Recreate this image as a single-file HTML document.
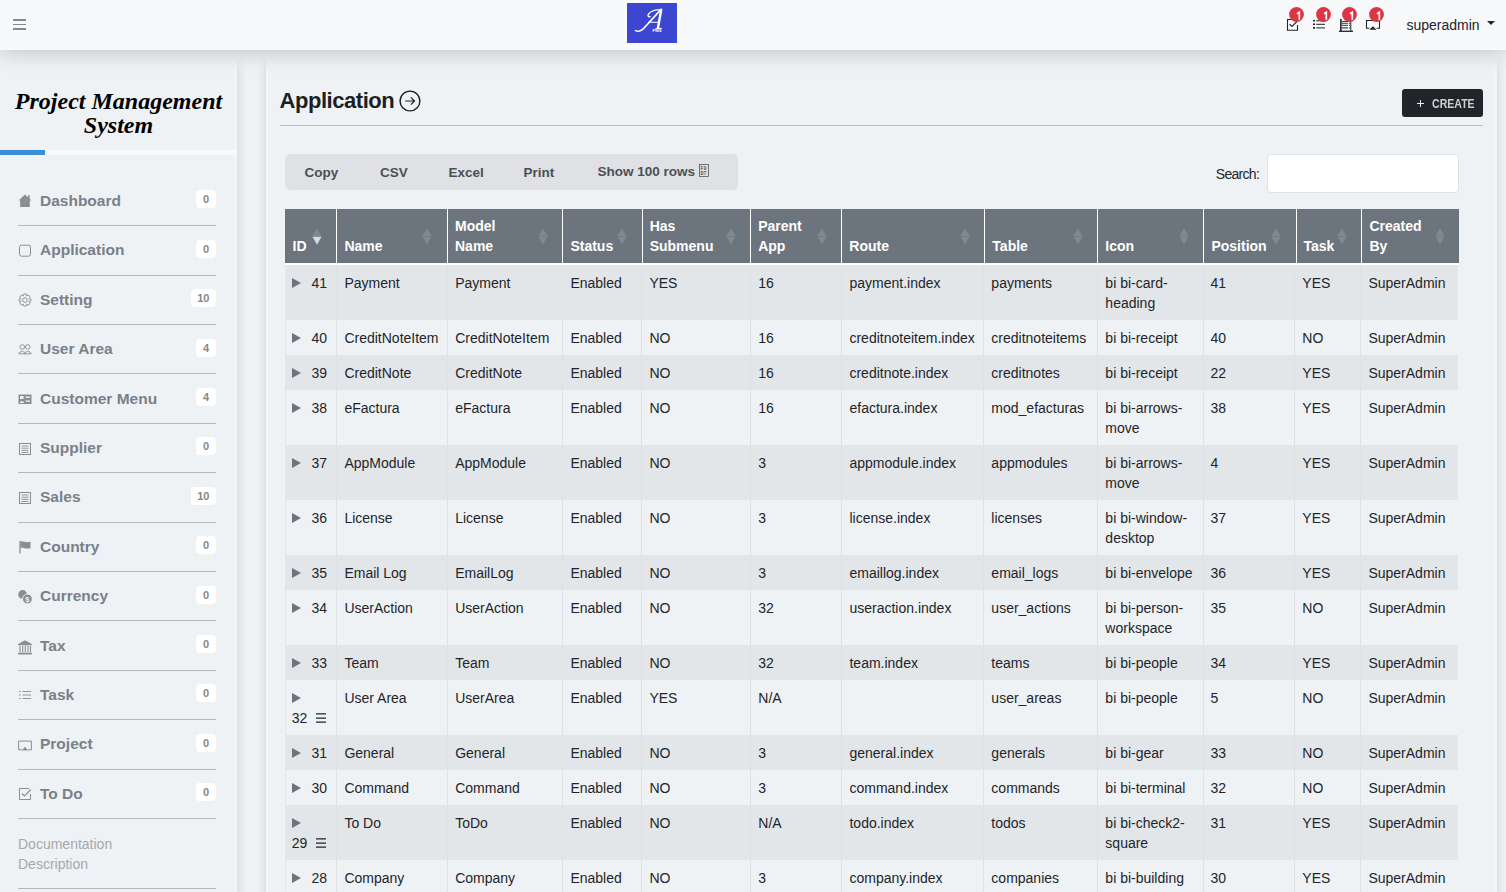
<!DOCTYPE html>
<html><head><meta charset="utf-8"><title>Application</title>
<style>
*{box-sizing:border-box;}
html,body{margin:0;padding:0;}
body{width:1506px;height:892px;overflow:hidden;background:#eff2f5;font-family:"Liberation Sans",sans-serif;color:#212529;position:relative;}
svg{display:block;overflow:visible;}
.nav{position:absolute;left:0;top:0;width:1506px;height:50px;background:#f8f9fa;box-shadow:0 2px 22px rgba(0,0,0,.20);z-index:5;}
.burger{position:absolute;left:12.7px;top:19px;width:13.3px;height:11px;}
.burger i{position:absolute;left:0;width:100%;height:1.5px;background:#86898c;}
.logo{position:absolute;left:627px;top:3px;width:50px;height:40px;background:#3d46d1;}
.nicon{position:absolute;}
.nbadge{position:absolute;top:7px;width:15px;height:15px;}
.user{position:absolute;left:1406.5px;top:14.5px;font-size:14px;line-height:20px;color:#212529;}
.caret{position:absolute;left:1487px;top:21px;width:0;height:0;border-left:4px solid transparent;border-right:4px solid transparent;border-top:4.5px solid #212529;}

.side{position:absolute;left:0;top:66px;width:237px;height:850px;background:#eff2f5;box-shadow:inset -2px 0 0 #f3f6f9;}
.shr{position:absolute;top:56px;height:850px;width:9px;-webkit-mask-image:linear-gradient(to bottom,transparent,#000 18px);mask-image:linear-gradient(to bottom,transparent,#000 18px);}
.inner{position:absolute;left:0;top:8px;width:100%;height:1px;}
.stitle{position:absolute;left:0;top:15px;width:237px;text-align:center;font-family:"Liberation Serif",serif;font-style:italic;font-weight:bold;font-size:24px;line-height:24px;color:#000;}
.sbar{position:absolute;left:0;top:76px;width:237px;height:5px;background:#f7fafc;}
.sbar b{position:absolute;left:0;top:0;width:45px;height:5px;background:#3b8fd2;}
.mi{position:absolute;left:18px;width:198px;height:49.4px;border-bottom:1px solid #b5b9bd;}
.mi .ic{position:absolute;left:0;top:17px;width:14px;height:14px;}
.mi .tx{position:absolute;left:22px;top:14px;font-weight:bold;font-size:15.5px;line-height:20px;color:#7a8088;white-space:nowrap;}
.mi .bd{position:absolute;right:0;top:13.5px;height:18px;min-width:20px;padding:0 6.5px;border-radius:4px;background:#fff;color:#85878a;font-weight:bold;font-size:11px;line-height:19px;text-align:center;}
.doc{position:absolute;left:18px;top:760px;width:198px;height:55px;border-bottom:1px solid #b5b9bd;font-size:14px;line-height:20px;color:#a4a9ae;}

.main{position:absolute;left:265.5px;top:66px;width:1231px;height:850px;background:#eff2f5;box-shadow:inset 2px 0 0 #f3f6f9,inset -2px 0 0 #f3f6f9;}
.h1{position:absolute;left:14px;top:13px;font-size:22px;font-weight:bold;line-height:28px;color:#1c1f23;white-space:nowrap;letter-spacing:-0.45px;}
.circ{position:absolute;left:133.5px;top:15.5px;width:22px;height:22px;}
.hr{position:absolute;left:14.5px;top:51px;width:1203px;height:1px;background:#babec2;}
.create{position:absolute;left:1136.7px;top:15px;width:81px;height:27.5px;background:#212529;border-radius:3px;color:#cfcfcf;font-size:11.5px;line-height:27.5px;white-space:nowrap;}
.create .plus{position:absolute;left:14.8px;top:11px;}
.create .ctx{position:absolute;left:29.7px;top:1.6px;font-size:12px;font-weight:bold;transform:scaleX(0.88);transform-origin:0 50%;}
.btns{position:absolute;left:19px;top:80px;width:453px;height:36px;background:#dfe1e4;border-radius:5px;}
.btns span{position:absolute;top:10px;font-weight:bold;font-size:13.5px;line-height:18px;color:#4b5055;white-space:nowrap;}
.btns .tofu{left:414.5px;top:10px;}
.search{position:absolute;left:950.3px;top:90px;letter-spacing:-0.7px;font-size:14px;line-height:20px;color:#212529;}
.sinput{position:absolute;left:1001.5px;top:80px;width:191.5px;height:39px;background:#fff;border:1px solid #dee2e6;border-radius:4px;}

table{position:absolute;left:19.5px;border-collapse:separate;border-spacing:0;table-layout:fixed;font-size:14px;line-height:20px;}
table.th1{top:135px;}
table.tb1{top:191px;}
th{background:#6c757d;color:#fff;font-weight:bold;text-align:left;vertical-align:bottom;padding:5.5px 7px 7.5px 7px;border-left:1px solid #fff;border-bottom:2px solid #fff;height:56px;position:relative;white-space:nowrap;}
th:first-child{border-left:none;padding-left:7.5px;}
td{padding:7.5px 7px;vertical-align:top;border-left:1px solid #dfe2e5;white-space:nowrap;overflow:hidden;}
td:first-child{border-left:1px solid #e3e6e9;padding-left:5.7px;}
tbody tr:nth-child(odd){background:#e3e6e9;}
tbody tr:nth-child(even){background:#eff2f5;}
.tri{display:inline-block;width:0;height:0;border-top:5px solid transparent;border-bottom:5px solid transparent;border-left:9.8px solid #6c757d;margin-right:10.9px;vertical-align:-0.3px;}
.hb{display:inline-block;margin-left:9px;vertical-align:0px;}
.hb svg{display:inline-block;}
.sort{position:absolute;right:14.5px;top:19px;width:10px;height:17px;}

</style></head>
<body>
<div class="nav">
  <div class="burger"><i style="top:0"></i><i style="top:4.6px"></i><i style="top:9.1px"></i></div>
  <div class="logo"><svg width="50" height="40" viewBox="0 0 50 40" ><g fill="none" stroke="#fff" stroke-linecap="round"><path d="M8.5 27.6 C11.5 29.2 14.5 28 18 24 L33.8 6.6" stroke-width="1.6"/><path d="M33.8 6.6 C30 6.6 24.5 7.6 21.8 10.6 C20.4 12.3 21 14 23 13.8" stroke-width="1.4"/><path d="M34.2 6.8 L31 24.8" stroke-width="2.4"/><path d="M21.5 19.3 H31.6" stroke-width="1.1"/><path d="M28.8 25.4 H34.5" stroke-width="1"/></g><text x="25.5" y="28.8" font-family="Liberation Sans" font-weight="bold" font-size="4.2" fill="#fff">PMS</text></svg></div>
  <span class="nicon" style="left:1287px;top:19px"><svg width="12" height="12" viewBox="0 0 12 12" ><path d="M8.2 0.5 H0.5 V11.3 H10.5 V6" fill="none" stroke="#212529" stroke-width="1.1"/><path d="M2.6 5.3 L5 7.4 L10.2 2.4" fill="none" stroke="#212529" stroke-width="1.2"/></svg></span><span class="nicon" style="left:1313px;top:19px"><svg width="13" height="11" viewBox="0 0 13 11" ><path d="M0 1.8h2M0 5.3h2M0 8.9h2" stroke="#212529" stroke-width="1.6"/><path d="M3.2 1.8h8.8M3.2 5.3h8.8M3.2 8.9h8.8" stroke="#212529" stroke-width="1"/></svg></span><span class="nicon" style="left:1339px;top:18px"><svg width="14" height="14" viewBox="0 0 14 14" ><path d="M1.9 1 V13" stroke="#212529" stroke-width="1.6"/><path d="M11.8 2 V13" stroke="#212529" stroke-width="1"/><path d="M0 13.3 H14" stroke="#212529" stroke-width="1.3"/><path d="M3 3.5h6M3 5.3h6M3 7.3h6" stroke="#212529" stroke-width="0.9"/><path d="M3 9.9h6" stroke="#6b6f78" stroke-width="1.6"/><path d="M10 5.3h1M10 7.3h1M10 9.9h1" stroke="#212529" stroke-width="1"/></svg></span><span class="nicon" style="left:1366px;top:20px"><svg width="14" height="10" viewBox="0 0 14 10" ><path d="M3.2 8.2 H0.5 V0.5 H13.5 V8.2 H10.6" fill="none" stroke="#212529" stroke-width="1.1"/><path d="M3.2 9.7 L6.9 6.2 L10.5 9.7 Z" fill="#212529"/></svg></span><span class="nbadge" style="left:1288.9px"><svg width="15" height="15" viewBox="0 0 15 15" ><circle cx="7.5" cy="7.5" r="7.4" fill="#dc3545"/><path d="M8 6.7 L10.3 5.2 V12.7" fill="none" stroke="#fff" stroke-width="1.7"/></svg></span><span class="nbadge" style="left:1315.9px"><svg width="15" height="15" viewBox="0 0 15 15" ><circle cx="7.5" cy="7.5" r="7.4" fill="#dc3545"/><path d="M8 6.7 L10.3 5.2 V12.7" fill="none" stroke="#fff" stroke-width="1.7"/></svg></span><span class="nbadge" style="left:1341.8px"><svg width="15" height="15" viewBox="0 0 15 15" ><circle cx="7.5" cy="7.5" r="7.4" fill="#dc3545"/><path d="M8 6.7 L10.3 5.2 V12.7" fill="none" stroke="#fff" stroke-width="1.7"/></svg></span><span class="nbadge" style="left:1369.0px"><svg width="15" height="15" viewBox="0 0 15 15" ><circle cx="7.5" cy="7.5" r="7.4" fill="#dc3545"/><path d="M8 6.7 L10.3 5.2 V12.7" fill="none" stroke="#fff" stroke-width="1.7"/></svg></span>
  <div class="user">superadmin</div>
  <div class="caret"></div>
</div>
<div class="shr" style="left:237px;background:linear-gradient(to right,rgba(0,0,0,.075),rgba(0,0,0,.03) 40%,rgba(0,0,0,0))"></div>
<div class="shr" style="left:256.5px;background:linear-gradient(to left,rgba(0,0,0,.075),rgba(0,0,0,.03) 40%,rgba(0,0,0,0))"></div>
<div class="shr" style="left:1496.5px;background:linear-gradient(to right,rgba(0,0,0,.075),rgba(0,0,0,.03) 40%,rgba(0,0,0,0))"></div>
<div class="side"><div class="inner">
  <div class="stitle">Project Management<br>System</div>
  <div class="sbar"><b></b></div>
<div class="mi" style="top:102.90px"><span class="ic"><svg width="14" height="14" viewBox="0 0 14 14" ><path d="M7 0.6 L13.4 6.4 L11.8 6.4 L11.8 12.9 L2.2 12.9 L2.2 6.4 L0.6 6.4 Z" fill="#8a8d91"/><rect x="10" y="1.3" width="1.7" height="3.5" fill="#8a8d91"/></svg></span><span class="tx">Dashboard</span><span class="bd">0</span></div>
<div class="mi" style="top:152.30px"><span class="ic"><svg width="14" height="14" viewBox="0 0 14 14" ><rect x="1.5" y="2.2" width="11" height="11" rx="2" fill="none" stroke="#8a8d91" stroke-width="1"/></svg></span><span class="tx">Application</span><span class="bd">0</span></div>
<div class="mi" style="top:201.70px"><span class="ic"><svg width="14" height="14" viewBox="0 0 14 14" ><path d="M5.6 1 H8.4 L8.8 3 L10.6 2 L12.2 4.3 L10.8 5.7 L13 6.2 V8 L10.8 8.4 L12.2 10 L10.6 12.2 L8.8 11.1 L8.4 13 H5.6 L5.2 11.1 L3.4 12.2 L1.8 10 L3.2 8.4 L1 8 V6.2 L3.2 5.7 L1.8 4.3 L3.4 2 L5.2 3 Z" fill="none" stroke="#8a8d91" stroke-width="0.9"/><circle cx="7" cy="7.1" r="2.3" fill="none" stroke="#8a8d91" stroke-width="0.9"/></svg></span><span class="tx">Setting</span><span class="bd">10</span></div>
<div class="mi" style="top:251.10px"><span class="ic"><svg width="14" height="14" viewBox="0 0 14 14" ><circle cx="4.3" cy="5" r="2.3" fill="none" stroke="#8a8d91" stroke-width="0.9"/><circle cx="9.7" cy="5" r="2.3" fill="none" stroke="#8a8d91" stroke-width="0.9"/><path d="M0.8 11.8 C1.2 8.8 7.2 8.8 7.4 11.8 Z M6.6 11.8 C6.8 8.8 12.8 8.8 13.2 11.8 Z" fill="none" stroke="#8a8d91" stroke-width="0.9"/></svg></span><span class="tx">User Area</span><span class="bd">4</span></div>
<div class="mi" style="top:300.50px"><span class="ic"><svg width="14" height="14" viewBox="0 0 14 14" ><rect x="0.5" y="2.5" width="13" height="9.5" fill="#8a8d91"/><rect x="2" y="4" width="3.5" height="3" fill="#eff2f5"/><path d="M1.8 11 C2 8.3 5.8 8.3 6 11 Z" fill="#eff2f5"/><rect x="7.5" y="4.5" width="4.5" height="1.3" fill="#eff2f5"/><rect x="7.5" y="8.5" width="4.5" height="1.3" fill="#eff2f5"/></svg></span><span class="tx">Customer Menu</span><span class="bd">4</span></div>
<div class="mi" style="top:349.90px"><span class="ic"><svg width="14" height="14" viewBox="0 0 14 14" ><rect x="1.5" y="2.5" width="11" height="11" fill="none" stroke="#8a8d91" stroke-width="1"/><path d="M3.5 5h7M3.5 7.2h7M3.5 9.4h7M3.5 11.5h7" stroke="#8a8d91" stroke-width="0.9"/></svg></span><span class="tx">Supplier</span><span class="bd">0</span></div>
<div class="mi" style="top:399.30px"><span class="ic"><svg width="14" height="14" viewBox="0 0 14 14" ><rect x="1.5" y="2.5" width="11" height="11" fill="none" stroke="#8a8d91" stroke-width="1"/><path d="M3.5 5h7M3.5 7.2h7M3.5 9.4h7M3.5 11.5h7" stroke="#8a8d91" stroke-width="0.9"/></svg></span><span class="tx">Sales</span><span class="bd">10</span></div>
<div class="mi" style="top:448.70px"><span class="ic"><svg width="14" height="14" viewBox="0 0 14 14" ><path d="M2 1 V13.5" stroke="#8a8d91" stroke-width="1.3"/><path d="M2.5 1.5 C5 0.5 7 3 12.5 1.8 V8.2 C7 9.4 5 7 2.5 8 Z" fill="#8a8d91"/></svg></span><span class="tx">Country</span><span class="bd">0</span></div>
<div class="mi" style="top:498.10px"><span class="ic"><svg width="14" height="14" viewBox="0 0 14 14" ><circle cx="4.6" cy="5.5" r="4.4" fill="#8a8d91"/><circle cx="9.4" cy="10" r="4.9" fill="#8a8d91" stroke="#eff2f5" stroke-width="1"/><text x="9.4" y="12.8" font-size="7.5" font-family="Liberation Sans" font-weight="bold" fill="#eff2f5" text-anchor="middle">$</text></svg></span><span class="tx">Currency</span><span class="bd">0</span></div>
<div class="mi" style="top:547.50px"><span class="ic"><svg width="14" height="14" viewBox="0 0 14 14" ><path d="M7 1.3 L13.8 5 V6.3 H0.2 V5 Z" fill="#8a8d91"/><path d="M2 6.8V13M4.7 6.8V13M7.3 6.8V13M10 6.8V13M12.5 6.8V13" stroke="#8a8d91" stroke-width="1.1"/><rect x="0.2" y="13.6" width="13.6" height="1.9" fill="#8a8d91"/></svg></span><span class="tx">Tax</span><span class="bd">0</span></div>
<div class="mi" style="top:596.90px"><span class="ic"><svg width="14" height="14" viewBox="0 0 14 14" ><path d="M1 3.5h1.5M1 7h1.5M1 10.5h1.5" stroke="#8a8d91" stroke-width="1.2"/><path d="M4.5 3.5h8.5M4.5 7h8.5M4.5 10.5h8.5" stroke="#8a8d91" stroke-width="0.9"/></svg></span><span class="tx">Task</span><span class="bd">0</span></div>
<div class="mi" style="top:646.30px"><span class="ic"><svg width="14" height="14" viewBox="0 0 14 14" ><path d="M4 12.8 H0.6 V4.1 H13.4 V12.8 H10" fill="none" stroke="#8a8d91" stroke-width="1"/><path d="M3.8 13.6 L7 9.8 L10.2 13.6 Z" fill="#8a8d91"/></svg></span><span class="tx">Project</span><span class="bd">0</span></div>
<div class="mi" style="top:695.70px"><span class="ic"><svg width="14" height="14" viewBox="0 0 14 14" ><path d="M11 1.5 H1.5 V12.5 H12.5 V7" fill="none" stroke="#8a8d91" stroke-width="1"/><path d="M4 6.5 L6.5 9 L12.8 2.5" fill="none" stroke="#8a8d91" stroke-width="1.1"/></svg></span><span class="tx">To Do</span><span class="bd">0</span></div>
  <div class="doc">Documentation<br>Description</div>
</div></div>
<div class="main"><div class="inner">
  <div class="h1">Application</div>
  <span class="circ"><svg width="22" height="22" viewBox="0 0 22 22" ><circle cx="11" cy="11" r="9.9" fill="none" stroke="#1c1f23" stroke-width="1.4"/><path d="M6.3 11 H15.3 M11.9 7.4 L15.5 11 L11.9 14.6" fill="none" stroke="#1c1f23" stroke-width="1.2"/></svg></span>
  <div class="hr"></div>
  <div class="create"><span class="plus"><svg width="7" height="7" viewBox="0 0 7 7" ><path d="M3.5 0 V7 M0 3.5 H7" stroke="#f0f0f0" stroke-width="1"/></svg></span><span class="ctx">CREATE</span></div>
  <div class="btns"><span style="left:20px">Copy</span><span style="left:95.5px">CSV</span><span style="left:164px">Excel</span><span style="left:239px">Print</span><span style="left:313px;top:9px">Show 100 rows</span><span class="tofu"><svg width="10" height="13" viewBox="0 0 10 13" ><rect x="0.5" y="0.5" width="9" height="12" fill="none" stroke="#53585d" stroke-width="0.8"/><text x="1.5" y="5.8" font-size="5" font-family="Liberation Mono" fill="#53585d">F0</text><text x="1.5" y="11.3" font-size="5" font-family="Liberation Mono" fill="#53585d">D7</text></svg></span></div>
  <div class="search">Search:</div>
  <div class="sinput"></div>
  <table class="th1" style="width:1174px"><colgroup><col style="width:51.4px"><col style="width:110.6px"><col style="width:115.4px"><col style="width:79.3px"><col style="width:108.5px"><col style="width:91.2px"><col style="width:143.0px"><col style="width:112.9px"><col style="width:106.2px"><col style="width:92.1px"><col style="width:65.9px"><col style="width:97.5px"></colgroup><thead><tr><th>ID<span class="sort"><svg width="10" height="17" viewBox="0 0 10 17" ><path d="M5 0.3 L9.5 8.2 H0.5 Z" fill="#fff" fill-opacity="0.15"/><path d="M0.5 8.8 H9.5 L5 16.7 Z" fill="#fff" fill-opacity="0.72"/></svg></span></th><th>Name<span class="sort"><svg width="10" height="17" viewBox="0 0 10 17" ><path d="M5 0.3 L9.5 8.2 H0.5 Z" fill="#fff" fill-opacity="0.15"/><path d="M0.5 8.8 H9.5 L5 16.7 Z" fill="#fff" fill-opacity="0.15"/></svg></span></th><th>Model<br>Name<span class="sort"><svg width="10" height="17" viewBox="0 0 10 17" ><path d="M5 0.3 L9.5 8.2 H0.5 Z" fill="#fff" fill-opacity="0.15"/><path d="M0.5 8.8 H9.5 L5 16.7 Z" fill="#fff" fill-opacity="0.15"/></svg></span></th><th>Status<span class="sort"><svg width="10" height="17" viewBox="0 0 10 17" ><path d="M5 0.3 L9.5 8.2 H0.5 Z" fill="#fff" fill-opacity="0.15"/><path d="M0.5 8.8 H9.5 L5 16.7 Z" fill="#fff" fill-opacity="0.15"/></svg></span></th><th>Has<br>Submenu<span class="sort"><svg width="10" height="17" viewBox="0 0 10 17" ><path d="M5 0.3 L9.5 8.2 H0.5 Z" fill="#fff" fill-opacity="0.15"/><path d="M0.5 8.8 H9.5 L5 16.7 Z" fill="#fff" fill-opacity="0.15"/></svg></span></th><th>Parent<br>App<span class="sort"><svg width="10" height="17" viewBox="0 0 10 17" ><path d="M5 0.3 L9.5 8.2 H0.5 Z" fill="#fff" fill-opacity="0.15"/><path d="M0.5 8.8 H9.5 L5 16.7 Z" fill="#fff" fill-opacity="0.15"/></svg></span></th><th>Route<span class="sort"><svg width="10" height="17" viewBox="0 0 10 17" ><path d="M5 0.3 L9.5 8.2 H0.5 Z" fill="#fff" fill-opacity="0.15"/><path d="M0.5 8.8 H9.5 L5 16.7 Z" fill="#fff" fill-opacity="0.15"/></svg></span></th><th>Table<span class="sort"><svg width="10" height="17" viewBox="0 0 10 17" ><path d="M5 0.3 L9.5 8.2 H0.5 Z" fill="#fff" fill-opacity="0.15"/><path d="M0.5 8.8 H9.5 L5 16.7 Z" fill="#fff" fill-opacity="0.15"/></svg></span></th><th>Icon<span class="sort"><svg width="10" height="17" viewBox="0 0 10 17" ><path d="M5 0.3 L9.5 8.2 H0.5 Z" fill="#fff" fill-opacity="0.15"/><path d="M0.5 8.8 H9.5 L5 16.7 Z" fill="#fff" fill-opacity="0.15"/></svg></span></th><th>Position<span class="sort"><svg width="10" height="17" viewBox="0 0 10 17" ><path d="M5 0.3 L9.5 8.2 H0.5 Z" fill="#fff" fill-opacity="0.15"/><path d="M0.5 8.8 H9.5 L5 16.7 Z" fill="#fff" fill-opacity="0.15"/></svg></span></th><th>Task<span class="sort"><svg width="10" height="17" viewBox="0 0 10 17" ><path d="M5 0.3 L9.5 8.2 H0.5 Z" fill="#fff" fill-opacity="0.15"/><path d="M0.5 8.8 H9.5 L5 16.7 Z" fill="#fff" fill-opacity="0.15"/></svg></span></th><th>Created<br>By<span class="sort"><svg width="10" height="17" viewBox="0 0 10 17" ><path d="M5 0.3 L9.5 8.2 H0.5 Z" fill="#fff" fill-opacity="0.15"/><path d="M0.5 8.8 H9.5 L5 16.7 Z" fill="#fff" fill-opacity="0.15"/></svg></span></th></tr></thead></table><table class="tb1" style="width:1172.5px"><colgroup><col style="width:51.4px"><col style="width:110.8px"><col style="width:115.2px"><col style="width:79.0px"><col style="width:108.9px"><col style="width:91.2px"><col style="width:141.9px"><col style="width:114.0px"><col style="width:105.2px"><col style="width:91.8px"><col style="width:66.1px"><col style="width:97.0px"></colgroup><tbody><tr><td class="idc"><span class="tri"></span>41</td><td>Payment</td><td>Payment</td><td>Enabled</td><td>YES</td><td>16</td><td>payment.index</td><td>payments</td><td>bi bi-card-<br>heading</td><td>41</td><td>YES</td><td>SuperAdmin</td></tr><tr><td class="idc"><span class="tri"></span>40</td><td>CreditNoteItem</td><td>CreditNoteItem</td><td>Enabled</td><td>NO</td><td>16</td><td>creditnoteitem.index</td><td>creditnoteitems</td><td>bi bi-receipt</td><td>40</td><td>NO</td><td>SuperAdmin</td></tr><tr><td class="idc"><span class="tri"></span>39</td><td>CreditNote</td><td>CreditNote</td><td>Enabled</td><td>NO</td><td>16</td><td>creditnote.index</td><td>creditnotes</td><td>bi bi-receipt</td><td>22</td><td>YES</td><td>SuperAdmin</td></tr><tr><td class="idc"><span class="tri"></span>38</td><td>eFactura</td><td>eFactura</td><td>Enabled</td><td>NO</td><td>16</td><td>efactura.index</td><td>mod_efacturas</td><td>bi bi-arrows-<br>move</td><td>38</td><td>YES</td><td>SuperAdmin</td></tr><tr><td class="idc"><span class="tri"></span>37</td><td>AppModule</td><td>AppModule</td><td>Enabled</td><td>NO</td><td>3</td><td>appmodule.index</td><td>appmodules</td><td>bi bi-arrows-<br>move</td><td>4</td><td>YES</td><td>SuperAdmin</td></tr><tr><td class="idc"><span class="tri"></span>36</td><td>License</td><td>License</td><td>Enabled</td><td>NO</td><td>3</td><td>license.index</td><td>licenses</td><td>bi bi-window-<br>desktop</td><td>37</td><td>YES</td><td>SuperAdmin</td></tr><tr><td class="idc"><span class="tri"></span>35</td><td>Email Log</td><td>EmailLog</td><td>Enabled</td><td>NO</td><td>3</td><td>emaillog.index</td><td>email_logs</td><td>bi bi-envelope</td><td>36</td><td>YES</td><td>SuperAdmin</td></tr><tr><td class="idc"><span class="tri"></span>34</td><td>UserAction</td><td>UserAction</td><td>Enabled</td><td>NO</td><td>32</td><td>useraction.index</td><td>user_actions</td><td>bi bi-person-<br>workspace</td><td>35</td><td>NO</td><td>SuperAdmin</td></tr><tr><td class="idc"><span class="tri"></span>33</td><td>Team</td><td>Team</td><td>Enabled</td><td>NO</td><td>32</td><td>team.index</td><td>teams</td><td>bi bi-people</td><td>34</td><td>YES</td><td>SuperAdmin</td></tr><tr><td class="idc"><span class="tri"></span><br>32<span class="hb"><svg width="10" height="10" viewBox="0 0 10 10" ><path d="M0 0.9h10M0 5.1h10M0 9.2h10" stroke="#212529" stroke-width="1.2"/></svg></span></td><td>User Area</td><td>UserArea</td><td>Enabled</td><td>YES</td><td>N/A</td><td></td><td>user_areas</td><td>bi bi-people</td><td>5</td><td>NO</td><td>SuperAdmin</td></tr><tr><td class="idc"><span class="tri"></span>31</td><td>General</td><td>General</td><td>Enabled</td><td>NO</td><td>3</td><td>general.index</td><td>generals</td><td>bi bi-gear</td><td>33</td><td>NO</td><td>SuperAdmin</td></tr><tr><td class="idc"><span class="tri"></span>30</td><td>Command</td><td>Command</td><td>Enabled</td><td>NO</td><td>3</td><td>command.index</td><td>commands</td><td>bi bi-terminal</td><td>32</td><td>NO</td><td>SuperAdmin</td></tr><tr><td class="idc"><span class="tri"></span><br>29<span class="hb"><svg width="10" height="10" viewBox="0 0 10 10" ><path d="M0 0.9h10M0 5.1h10M0 9.2h10" stroke="#212529" stroke-width="1.2"/></svg></span></td><td>To Do</td><td>ToDo</td><td>Enabled</td><td>NO</td><td>N/A</td><td>todo.index</td><td>todos</td><td>bi bi-check2-<br>square</td><td>31</td><td>YES</td><td>SuperAdmin</td></tr><tr><td class="idc"><span class="tri"></span>28</td><td>Company</td><td>Company</td><td>Enabled</td><td>NO</td><td>3</td><td>company.index</td><td>companies</td><td>bi bi-building</td><td>30</td><td>YES</td><td>SuperAdmin</td></tr></tbody></table>
</div></div>
</body></html>
